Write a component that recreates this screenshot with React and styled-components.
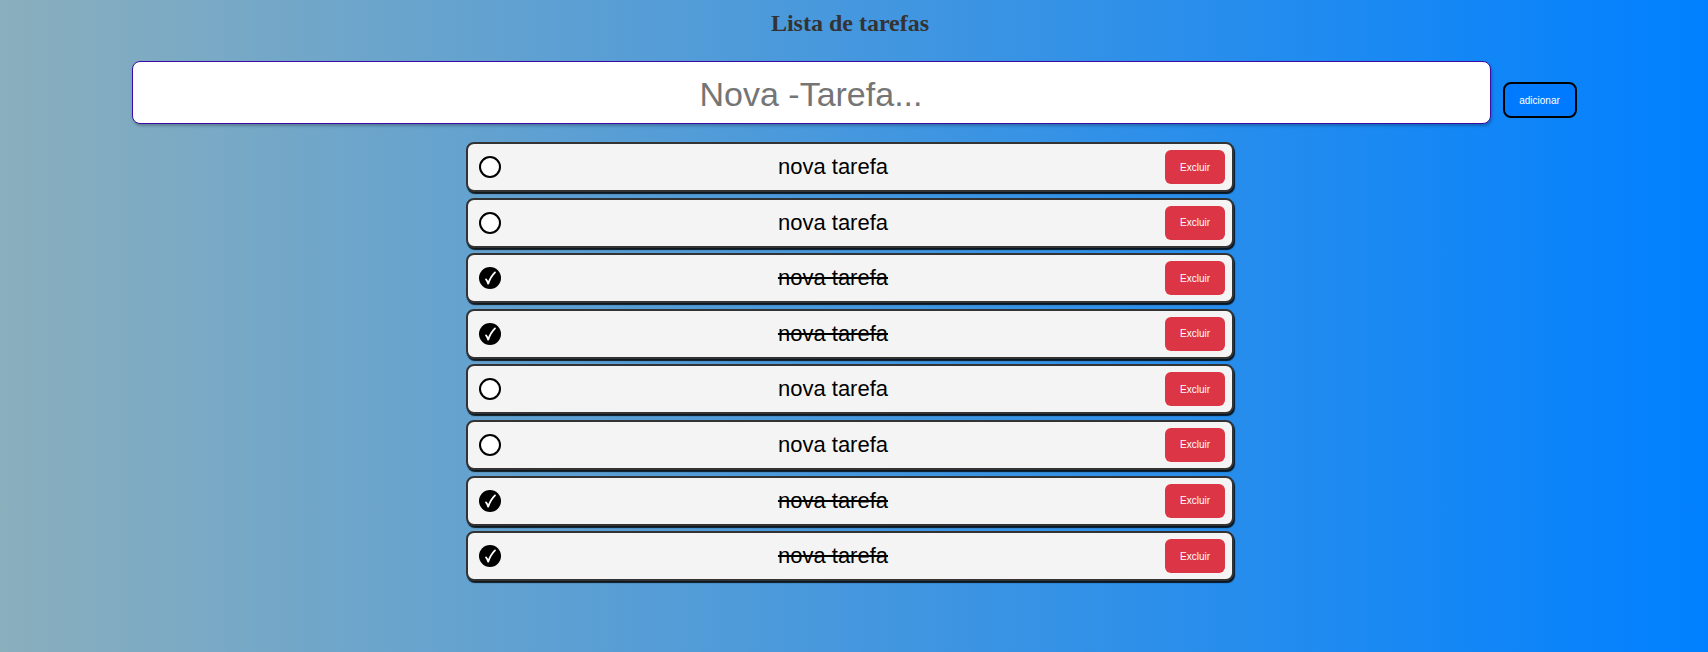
import React, { useState } from "react";
import styled, { createGlobalStyle } from "styled-components";

// estilos globais
const GlobalStyle = createGlobalStyle`
  html, body {
    margin: 0;
    min-height: 100%;
  }
  body {
    min-height: 652px;
    background: linear-gradient(to right, #8aafbd, #0080ff);
    font-family: "Liberation Sans", Arial, sans-serif;
  }
`;

const initialTasks = [
  { id: 1, text: "nova tarefa", done: false },
  { id: 2, text: "nova tarefa", done: false },
  { id: 3, text: "nova tarefa", done: true },
  { id: 4, text: "nova tarefa", done: true },
  { id: 5, text: "nova tarefa", done: false },
  { id: 6, text: "nova tarefa", done: false },
  { id: 7, text: "nova tarefa", done: true },
  { id: 8, text: "nova tarefa", done: true },
];

const CheckIcon = ({ done }) =>
  done ? (
    <svg width="22" height="22" viewBox="0 0 22 22">
      <circle cx="11" cy="11" r="11" fill="#000" />
      <path
        d="M7 12.4 C8 13.4 8.6 14.8 9.2 16.6 C10.8 12.2 12.9 8.4 16 5.4"
        fill="none"
        stroke="#fff"
        strokeWidth="1.8"
        strokeLinecap="round"
        strokeLinejoin="round"
      />
    </svg>
  ) : (
    <svg width="22" height="22" viewBox="0 0 22 22">
      <circle cx="11" cy="11" r="10" fill="#fff" stroke="#000" strokeWidth="2" />
    </svg>
  );

const App = () => {
  const [tasks, setTasks] = useState(initialTasks);
  const [value, setValue] = useState("");

  const addTask = () => {
    if (!value.trim()) return;
    setTasks([...tasks, { id: Date.now(), text: value, done: false }]);
    setValue("");
  };

  const toggle = (id) =>
    setTasks(tasks.map((t) => (t.id === id ? { ...t, done: !t.done } : t)));

  const remove = (id) => setTasks(tasks.filter((t) => t.id !== id));

  return (
    <>
      <GlobalStyle />
      <Page>
        <Title>Lista de tarefas</Title>
        <InputRow>
          <TaskInput
            placeholder="Nova -Tarefa..."
            value={value}
            onChange={(e) => setValue(e.target.value)}
          />
          <AddButton onClick={addTask}>adicionar</AddButton>
        </InputRow>
        <TaskList>
          {tasks.map((task) => (
            <TaskItem key={task.id}>
              <Toggle onClick={() => toggle(task.id)}>
                <CheckIcon done={task.done} />
              </Toggle>
              <TaskText $done={task.done}>{task.text}</TaskText>
              <DeleteButton onClick={() => remove(task.id)}>Excluir</DeleteButton>
            </TaskItem>
          ))}
        </TaskList>
      </Page>
    </>
  );
};

// estilos
const Page = styled.div`
  display: flex;
  flex-direction: column;
  align-items: center;
`;

const Title = styled.h2`
  margin: 10px 8px 0 0;
  font-family: "Liberation Serif", "Times New Roman", serif;
  font-size: 24px;
  font-weight: bold;
  color: #333;
`;

const InputRow = styled.div`
  display: flex;
  align-items: flex-start;
  gap: 12px;
  margin-top: 24px;
`;

const TaskInput = styled.input`
  box-sizing: border-box;
  width: 1359px;
  height: 63px;
  padding-top: 4px;
  border: 1px solid #3a0ca3;
  border-radius: 8px;
  background: #fff;
  box-shadow: 1px 2px 3px rgba(0, 0, 0, 0.25);
  font-family: "Liberation Sans", Arial, sans-serif;
  font-size: 34px;
  text-align: center;
  outline: none;

  &::placeholder {
    color: #757575;
  }
`;

const AddButton = styled.button`
  box-sizing: border-box;
  width: 74px;
  height: 36px;
  margin-top: 21px;
  background: #007bff;
  border: 2px solid #000;
  border-radius: 8px;
  color: #fff;
  font-family: "Liberation Sans", Arial, sans-serif;
  font-size: 10px;
  cursor: pointer;
`;

const TaskList = styled.ul`
  list-style: none;
  margin: 18px 8px 0 0;
  padding: 0;
  width: 768px;
  display: flex;
  flex-direction: column;
  gap: 5.6px;
`;

const TaskItem = styled.li`
  box-sizing: border-box;
  height: 50px;
  display: flex;
  align-items: center;
  gap: 12px;
  padding: 0 7px 0 11px;
  background: #f4f4f4;
  border: 2px solid #333;
  border-radius: 8px;
  box-shadow: 1px 2px 1px rgba(0, 0, 0, 0.85);
`;

const Toggle = styled.span`
  display: flex;
  width: 22px;
  height: 22px;
  cursor: pointer;
`;

const TaskText = styled.span`
  flex: 1;
  text-align: center;
  font-size: 22px;
  color: #000;
  text-decoration: ${({ $done }) => ($done ? "line-through" : "none")};
`;

const DeleteButton = styled.button`
  width: 60px;
  height: 34px;
  border: none;
  border-radius: 6px;
  background: #dc3545;
  color: #fff;
  font-family: "Liberation Sans", Arial, sans-serif;
  font-size: 10px;
  cursor: pointer;
`;

export default App;
